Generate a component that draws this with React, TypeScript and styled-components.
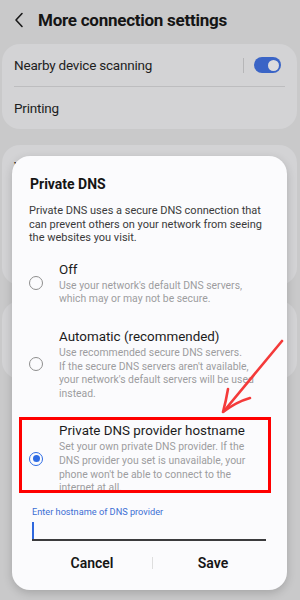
import React from 'react';
import styled, { createGlobalStyle } from 'styled-components';

const GlobalStyle = createGlobalStyle`
  html, body {
    margin: 0;
    padding: 0;
    background: #c9c9ca;
  }
  body {
    font-family: Roboto, "Noto Sans", sans-serif;
  }
`

const Screen = styled.div`
  position: relative;
  width: 300px;
  height: 600px;
  overflow: hidden;
  background: #c9c9ca;
`

const Header = styled.div`
  height: 40px;
  display: flex;
  align-items: center;
  padding-left: 14px;
  gap: 14px;
`

const HeaderTitle = styled.div`
  font-size: 17px;
  font-weight: 700;
  color: #151515;
  letter-spacing: -0.25px;
`

const Card = styled.div<{ $height?: number }>`
  margin: 4px 3px 0 2px;
  background: #d3d3d5;
  border-radius: 18px;
  padding: 0 12px;
  height: ${p => p.$height ? `${p.$height}px` : 'auto'};
  & + & {
    margin-top: 16px;
  }
`

const Row = styled.div<{ $divider?: boolean }>`
  height: 42px;
  display: flex;
  align-items: center;
  font-size: 13.5px;
  letter-spacing: -0.2px;
  color: #1e1e1e;
  border-bottom: ${p => p.$divider ? '1px solid #bdbdbf' : 'none'};
`

const RowLabel = styled.div`
  flex: 1;
`

const VDivider = styled.div`
  width: 1px;
  height: 15px;
  background: #b6b6b8;
  margin-right: 10px;
`

const Toggle = styled.div`
  width: 27px;
  height: 16px;
  border-radius: 8px;
  background: #3a64c6;
  display: flex;
  align-items: center;
  justify-content: flex-end;
  padding-right: 2px;
  box-sizing: border-box;
  margin-right: 4px;
`

const Knob = styled.div`
  width: 11px;
  height: 11px;
  border-radius: 50%;
  background: #dcdcde;
`

const Overlay = styled.div`
  position: absolute;
  left: 12px;
  top: 156px;
  width: 275px;
  height: 434px;
  background: #fbfbfd;
  border-radius: 18px;
  box-shadow: 0 3px 10px rgba(0, 0, 0, 0.18);
  padding: 18px 0 0;
  box-sizing: border-box;
  display: flex;
  flex-direction: column;
`

const DialogTitle = styled.div`
  font-size: 14px;
  font-weight: 700;
  color: #151515;
  line-height: 20px;
  padding-left: 18px;
`

const Description = styled.div`
  margin-top: 10px;
  padding: 0 18px 0 17px;
  font-size: 11px;
  line-height: 13.6px;
  color: #3a3a3a;
`

const Option = styled.div<{ $gap: number }>`
  margin-top: ${p => p.$gap}px;
  display: flex;
  align-items: center;
  padding-left: 17px;
  padding-right: 30px;
`

const Radio = styled.div<{ $checked?: boolean }>`
  width: 14px;
  height: 14px;
  box-sizing: border-box;
  border-radius: 50%;
  border: 1.5px solid ${p => p.$checked ? '#2d6be4' : '#8e8e8e'};
  display: flex;
  align-items: center;
  justify-content: center;
  flex-shrink: 0;
  &::after {
    content: '';
    display: ${p => p.$checked ? 'block' : 'none'};
    width: 7px;
    height: 7px;
    border-radius: 50%;
    background: #2d6be4;
  }
`

const OptionText = styled.div`
  margin-left: 16px;
  flex: 1;
`

const OptionTitle = styled.div`
  font-size: 13.4px;
  line-height: 18px;
  color: #1c1c1c;
  white-space: nowrap;
`

const OptionSub = styled.div`
  font-size: 10.4px;
  line-height: 13.6px;
  color: #9d9d9f;
`

const Field = styled.div`
  margin-top: 10px;
  padding: 0 21px 0 20px;
`

const FieldLabel = styled.div`
  font-size: 9.2px;
  line-height: 14px;
  color: #3d6fd4;
`

const Input = styled.div`
  height: 22px;
  border-bottom: 2px solid #3b3b3d;
  display: flex;
  align-items: flex-start;
  padding-top: 3px;
  box-sizing: border-box;
`

const Cursor = styled.div`
  width: 1.5px;
  height: 17px;
  background: #2f68de;
`

const Buttons = styled.div`
  margin-top: 12px;
  display: grid;
  grid-template-columns: 1fr 1px 1fr;
  align-items: center;
  padding: 0 14px 0 20px;
  height: 20px;
`

const Button = styled.div`
  text-align: center;
  font-size: 14px;
  font-weight: 600;
  color: #161616;
`

const BtnDivider = styled.div`
  width: 1px;
  height: 12px;
  background: #dedede;
`

const Highlight = styled.div`
  position: absolute;
  left: 19px;
  top: 417px;
  width: 252px;
  height: 76px;
  box-sizing: border-box;
  border: 3.5px solid #ff0000;
`

const Arrow = styled.svg`
  position: absolute;
  left: 0;
  top: 0;
  pointer-events: none;
`

const ChevronLeft = () => (
  <svg width="10" height="16" viewBox="0 0 10 16">
    <path d="M8 1.5 L2 8 L8 14.5" fill="none" stroke="#1a1a1a" strokeWidth="1.6" strokeLinecap="round" strokeLinejoin="round" />
  </svg>
)

const App: React.FC = () => {
  return (
    <Screen>
      <GlobalStyle />
      <Header>
        <ChevronLeft />
        <HeaderTitle>More connection settings</HeaderTitle>
      </Header>
      <Card>
        <Row $divider>
          <RowLabel>Nearby device scanning</RowLabel>
          <VDivider />
          <Toggle><Knob /></Toggle>
        </Row>
        <Row>
          <RowLabel>Printing</RowLabel>
        </Row>
      </Card>
      <Card $height={140}>
        <Row>
          <RowLabel>VPN</RowLabel>
        </Row>
      </Card>
      <Card $height={78} />

      <Overlay>
        <DialogTitle>Private DNS</DialogTitle>
        <Description>
          Private DNS uses a secure DNS connection that can prevent others on your network from seeing the websites you visit.
        </Description>
        <Option $gap={16}>
          <Radio />
          <OptionText>
            <OptionTitle>Off</OptionTitle>
            <OptionSub>Use your network's default DNS servers, which may or may not be secure.</OptionSub>
          </OptionText>
        </Option>
        <Option $gap={22}>
          <Radio />
          <OptionText>
            <OptionTitle>Automatic (recommended)</OptionTitle>
            <OptionSub>
              Use recommended secure DNS servers.<br />
              If the secure DNS servers aren't available, your network's default servers will be used instead.
            </OptionSub>
          </OptionText>
        </Option>
        <Option $gap={22}>
          <Radio $checked />
          <OptionText>
            <OptionTitle>Private DNS provider hostname</OptionTitle>
            <OptionSub>
              Set your own private DNS provider. If the DNS provider you set is unavailable, your phone won't be able to connect to the internet at all.
            </OptionSub>
          </OptionText>
        </Option>
        <Field>
          <FieldLabel>Enter hostname of DNS provider</FieldLabel>
          <Input><Cursor /></Input>
        </Field>
        <Buttons>
          <Button>Cancel</Button>
          <BtnDivider />
          <Button>Save</Button>
        </Buttons>
      </Overlay>

      <Highlight />
      <Arrow width="300" height="600" viewBox="0 0 300 600">
        <g fill="none" stroke="#f43a3a" strokeWidth="2.6" strokeLinecap="round" strokeLinejoin="round">
          <path d="M282 341 L224 411" />
          <path d="M228 389 Q226 401 223 412 Q236 402 250 398" />
        </g>
      </Arrow>
    </Screen>
  );
}

export default App;
